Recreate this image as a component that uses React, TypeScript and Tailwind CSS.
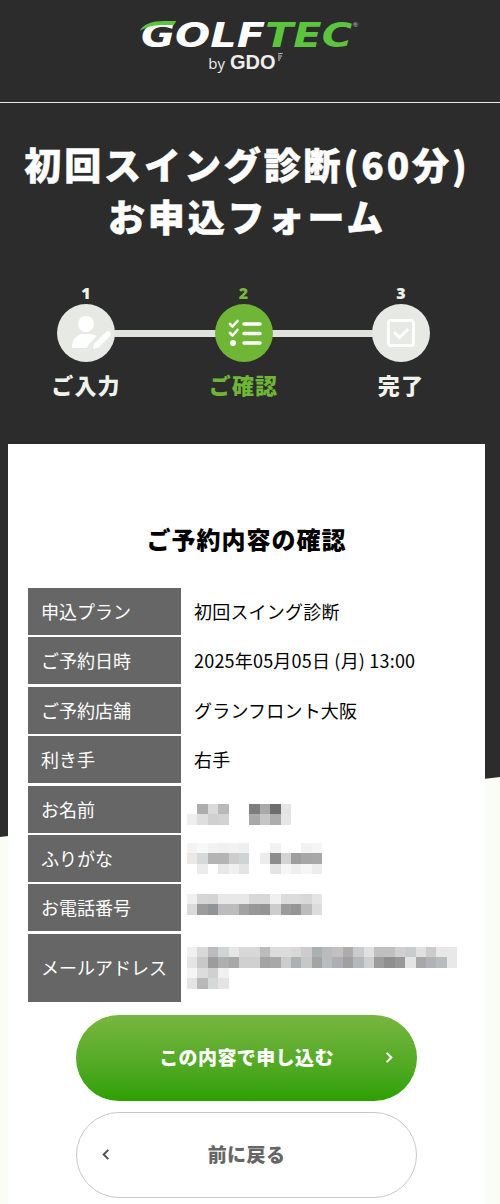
import React from "react";

const jp = "font-['Noto_Sans_CJK_JP','Noto_Sans',sans-serif]";

const rows: [string, string][] = [
  ["申込プラン", "初回スイング診断"],
  ["ご予約日時", "2025年05月05日 (月) 13:00"],
  ["ご予約店舗", "グランフロント大阪"],
  ["利き手", "右手"],
];

function Mosaic({ cells, cols }: { cells: string[]; cols: number }) {
  return (
    <div className="grid w-max" style={{ gridTemplateColumns: `repeat(${cols}, 10.4px)`, gridAutoRows: "10.4px" }}>
      {cells.map((c, i) => (
        <div key={i} style={{ backgroundColor: c }} />
      ))}
    </div>
  );
}

const W = "#ffffff";
const nameCells = [
  W, W, W, W, W, W, W, W, W, W,
  W, "#adadad", "#dadada", "#b9b9b9", W, W, "#7d7d7d", "#a9a9a9", "#6e6e6e", "#e4e4e4",
  "#eeeeee", "#dedede", "#d0d0d0", "#d2d2d2", W, W, "#a9a9a9", "#c6c6c6", "#adadad", "#e6e6e6",
];
const kanaCells = [
  "#f4f4f4", "#f8f8f8", "#f2f2f2", "#f0f0f0", "#f2f2f2", "#efefef", W, W, "#f2f2f2", W, W, "#f2f2f2", "#f6f6f6",
  "#ece8e4", "#d4dadb", "#b4b4b4", "#b4b4b4", "#cdcdcd", "#ced4d4", W, "#ececec", "#8c8c8c", "#d4d4d4", "#9e9e9e", "#a6a6a6", "#a8a8a8",
  W, "#ececec", W, "#e8e8e8", "#f0f0f0", "#e4e4e4", W, W, "#e4e4e4", "#f6f6f6", "#efefef", "#f6f6f6", "#ededed",
];
const telCells = [
  "#f0f0f0", "#d6d6d6", "#d4d4d4", "#e8e8e8", "#e8e8e8", "#e8e8e8", "#d8d8d8", "#d8d8d8", "#f0f0f0", "#dcdcdc", "#dcdcdc", "#d8d8d8", "#e4e4e4",
  "#dadada", "#9c9c9c", "#8f9496", "#bcbcbc", "#bcbcbc", "#a2a2a2", "#989898", "#949494", "#cccccc", "#9c9c9c", "#969696", "#bcbcbc", "#dcdcdc",
];
const mail1 = ["#f0f0f0","#d8d8d8","#bcbcbc","#d0d4d4","#e6e6e6","#d8d8d8","#d8d8d8","#bcbcbc","#dcdcdc","#dcdcdc","#d8d8d8","#cccccc","#acb0b0","#b8bcbc","#c4c0c0","#acacac","#c8cccc","#e0e0e0","#c0c0c0","#c0c0c0","#d0d0d0","#c8cccc","#e0e0e0","#cccccc","#e8e8e8","#e8e8e8"];
const mail2 = ["#e4e4e4","#c8c8c8","#9c9c9c","#acb0b0","#a8a8a8","#d0d0d0","#d0d0d0","#a4a4a4","#a8a8a8","#cccccc","#acb0b0","#c4c8c8","#a4a4a4","#b8bcbc","#acb0b4","#a0a0a0","#b4b8b8","#ccd0d0","#9c9c9c","#8f8f8f","#989898","#e4e4e4","#a8a8a8","#b0b4b8","#b8bcbc","#e8e8e8"];
const mail3 = ["#f4f4f4","#dcdcdc","#d0d0d0","#f0f0f0"];
const mail4 = ["#e4e4e4","#b8b8b8","#d4d8d8","#e4e4e4"];

function Row({ label, h = "h-[47px]", children }: { label: string; h?: string; children: React.ReactNode }) {
  return (
    <div className="flex items-center">
      <div className={`flex w-[153px] shrink-0 items-center bg-[#666666] pl-[13px] text-[18px] text-white ${h}`}>{label}</div>
      <div className="flex-1 pl-[13px] text-[18px] tracking-[0.2px] text-black">{children}</div>
    </div>
  );
}

function Step({ n, label, active, children }: { n: string; label: string; active?: boolean; children: React.ReactNode }) {
  return (
    <div className="z-10 flex w-[90px] flex-col items-center">
      <div className={`font-['Open_Sans',sans-serif] text-[16px] font-extrabold leading-[22px] ${active ? "text-[#76b83c]" : "text-[#f0f2ec]"}`}>{n}</div>
      <div className={`flex h-[58px] w-[58px] items-center justify-center rounded-full ${active ? "bg-[#6fb536]" : "bg-[#e7eae4]"}`}>
        {children}
      </div>
      <div className={`mt-[6px] text-[22px] font-black leading-[32px] tracking-[1.2px] ${active ? "text-[#6fb536]" : "text-[#f0f2ec]"}`}>{label}</div>
    </div>
  );
}

export default function App() {
  return (
    <div className={`relative h-[1204px] w-[500px] overflow-hidden bg-[#f9fdf3] ${jp}`}>
      <div className="absolute inset-0 bg-[#2c2c2c] [clip-path:polygon(0_0,100%_0,100%_777px,0_837px)]" />
      <div className="relative">
        <header className="flex h-[103px] flex-col items-center border-b border-[#e6e6e6] pt-[21px]">
          <div className="relative ml-[-7px] flex h-[28px] items-center font-['DejaVu_Sans',sans-serif] text-[34px] font-bold italic leading-[28px] scale-x-[1.22]">
            <span className="text-white">GOLF</span>
            <span className="text-[#5cc53e]">TEC</span>
            <svg viewBox="0 0 30 10" className="absolute left-[-1px] top-[0px] h-[10px] w-[30px]" fill="#5cc53e">
              <path d="M0 10C3 3 10 0 20 0h10l-2 4H19C12 4 5 6 0 10z" />
            </svg>
            <span className="absolute right-[-5px] top-[0px] font-['Liberation_Sans',sans-serif] text-[6px] leading-[8px] not-italic text-[#aaaaaa]">®</span>
          </div>
          <div className="mt-[2px] ml-[-8px] flex items-baseline gap-[5px] text-[#eeeeee]">
            <span className="font-['Open_Sans',sans-serif] text-[15px] leading-[22px]">by</span>
            <span className="font-['Liberation_Sans',sans-serif] text-[20px] font-bold leading-[22px]">GDO</span>
            <svg viewBox="0 0 7 8" className="ml-[-4px] mt-[2px] h-[8px] w-[7px] self-start" stroke="#cfcfcf" strokeWidth="1">
              <path d="M1 1l5-1M1 3h4M1 5h3M1 7h2" />
            </svg>
          </div>
        </header>

        <h1 className="mt-[35px] w-[494px] text-center text-[37px] font-black leading-[52px] tracking-[2.9px] text-white [-webkit-text-stroke:0.5px_white]">
          初回スイング診断(60分)
          <br />
          お申込フォーム
        </h1>

        <div className="relative ml-[41px] mt-[40px] flex w-[405px] justify-between">
          <div className="absolute left-[60px] right-[60px] top-[48px] h-[7px] bg-[#e0e3db]" />
          <Step n="1" label="ご入力">
            <svg viewBox="0 0 58 58" className="h-[58px] w-[58px]" fill="#ffffff">
              <circle cx="29" cy="20" r="8" />
              <path d="M15 44c0-9 5-14 12-14h6c3 0 5 1 7 2l-8 8-2 4z" />
              <path d="M36 45l1-5 12-12c1-1 3-1 4 0s1 3 0 4L41 44z" />
            </svg>
          </Step>
          <Step n="2" label="ご確認" active>
            <svg viewBox="0 0 58 58" className="h-[58px] w-[58px]" fill="none" stroke="#ffffff" strokeLinecap="round" strokeLinejoin="round">
              <path d="M15 20l2.500 2.500 5-5.500M15 29l2.500 2.500 5-5.500" strokeWidth="2.600" />
              <circle cx="18" cy="39" r="3" fill="#ffffff" stroke="none" />
              <path d="M29 20h16M29 29.500h16M29 39h16" strokeWidth="3.600" />
            </svg>
          </Step>
          <Step n="3" label="完了">
            <svg viewBox="0 0 58 58" className="h-[58px] w-[58px]" fill="none" stroke="#ffffff" strokeLinecap="round" strokeLinejoin="round">
              <rect x="16.500" y="16.500" width="25" height="25" rx="2.500" strokeWidth="2.800" />
              <path d="M23 29l4.500 4.500 8-7.500" strokeWidth="2.800" />
            </svg>
          </Step>
        </div>

        <main className="ml-[8px] mt-[44px] h-[760px] w-[477px] bg-white px-[20px] pt-[77px]">
          <h2 className="text-center text-[24px] font-black leading-[36px] tracking-[1px] text-black">ご予約内容の確認</h2>
          <div className="mt-[31px] flex flex-col gap-[2.4px]">
            {rows.map(([l, v]) => (
              <Row key={l} label={l}>{v}</Row>
            ))}
            <Row label="お名前"><div className="ml-[-7px]"><Mosaic cols={10} cells={nameCells} /></div></Row>
            <Row label="ふりがな"><div className="ml-[-7px]"><Mosaic cols={13} cells={kanaCells} /></div></Row>
            <Row label="お電話番号"><div className="mb-[7px] ml-[-7px]"><Mosaic cols={13} cells={telCells} /></div></Row>
            <Row label="メールアドレス" h="h-[68px]">
              <div className="ml-[-7px]">
                <Mosaic cols={26} cells={mail1.concat(mail2)} />
                <Mosaic cols={4} cells={mail3.concat(mail4)} />
              </div>
            </Row>
          </div>
          <div className="mt-[13px] flex flex-col items-center gap-[11px]">
            <button className="relative flex h-[86px] w-[341px] items-center justify-center rounded-full bg-gradient-to-b from-[#78b63f] to-[#2ca000] text-[19px] font-black tracking-[0.4px] text-white">
              この内容で申し込む
              <svg viewBox="0 0 10 14" className="absolute right-[23px] top-[36px] h-[13px] w-[10px]" fill="none" stroke="#ffffff" strokeWidth="2.200">
                <path d="M2.500 2l5 5-5 5" />
              </svg>
            </button>
            <button className="relative flex h-[86px] w-[341px] items-center justify-center rounded-full border border-[#c8c8c8] bg-white text-[19px] font-black tracking-[0.4px] text-[#666666]">
              前に戻る
              <svg viewBox="0 0 10 14" className="absolute left-[24px] top-[35px] h-[13px] w-[10px]" fill="none" stroke="#555555" strokeWidth="2.200">
                <path d="M7.500 2l-5 5 5 5" />
              </svg>
            </button>
          </div>
        </main>
      </div>
    </div>
  );
}
